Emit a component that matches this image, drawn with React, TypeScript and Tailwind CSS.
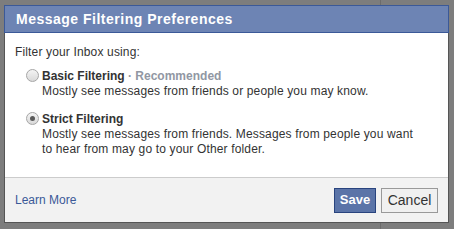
function Radio({ checked }: { checked?: boolean }) {
  return (
    <span className="mt-[1px] flex h-[13px] w-[13px] shrink-0 items-center justify-center rounded-full border border-[#a6a6a6] bg-gradient-to-b from-[#f4f4f4] to-[#d9d9d9]">
      {checked && <span className="h-[5px] w-[5px] rounded-full bg-[#5a5a5a]" />}
    </span>
  );
}

function Option({
  checked,
  title,
  extra,
  lines,
}: {
  checked?: boolean;
  title: string;
  extra?: string;
  lines: string[];
}) {
  return (
    <div className="flex gap-[3px] pl-[11px]">
      <Radio checked={checked} />
      <div>
        <div className="leading-[16px] font-bold text-[#333]">
          {title}
          {extra && <span className="text-[#9197a3]"> · {extra}</span>}
        </div>
        {lines.map((l) => (
          <div key={l} className="leading-[15px] tracking-[0.15px] text-[#333]">
            {l}
          </div>
        ))}
      </div>
    </div>
  );
}

export default function App() {
  return (
    <div
      className="relative h-[229px] w-[454px] overflow-hidden bg-[#7d7d7d] pt-[5px] pl-[4px] text-[12px]"
      style={{ fontFamily: '"Liberation Sans", Arial, sans-serif' }}
    >
      {/* backdrop seam behind the dialog */}
      <div className="absolute top-0 left-0 h-full w-[381px] border-r border-[#6c6c6c]" />

      <div className="relative flex h-[218px] w-[445px] flex-col border border-[#555] bg-white">
        <div className="-mx-px -mt-px flex h-[28px] items-center border border-[#3b5998] bg-[#6d84b4] pl-[11px] text-[14px] font-bold tracking-[0.5px] text-white">
          Message Filtering Preferences
        </div>

        <div className="flex-1 px-[10px] pt-[12px]">
          <div className="leading-[15px] tracking-[0.15px] text-[#333]">Filter your Inbox using:</div>
          <div className="mt-[8px]">
            <Option
              title="Basic Filtering"
              extra="Recommended"
              lines={['Mostly see messages from friends or people you may know.']}
            />
          </div>
          <div className="mt-[12px]">
            <Option
              checked
              title="Strict Filtering"
              lines={[
                'Mostly see messages from friends. Messages from people you want',
                'to hear from may go to your Other folder.',
              ]}
            />
          </div>
        </div>

        <div className="flex h-[45px] items-center justify-between border-t border-[#ccc] bg-[#f2f2f2] px-[10px]">
          <a className="text-[#3b5998]">Learn More</a>
          <div className="flex gap-[5px]">
            <button className="h-[25px] w-[42px] border border-[#29447e] bg-[#5b74a8] text-[13px] font-bold text-white">
              Save
            </button>
            <button className="h-[25px] w-[57px] border border-[#999] bg-[#f0f0f0] text-[14px] text-[#333]">
              Cancel
            </button>
          </div>
        </div>
      </div>
    </div>
  );
}
